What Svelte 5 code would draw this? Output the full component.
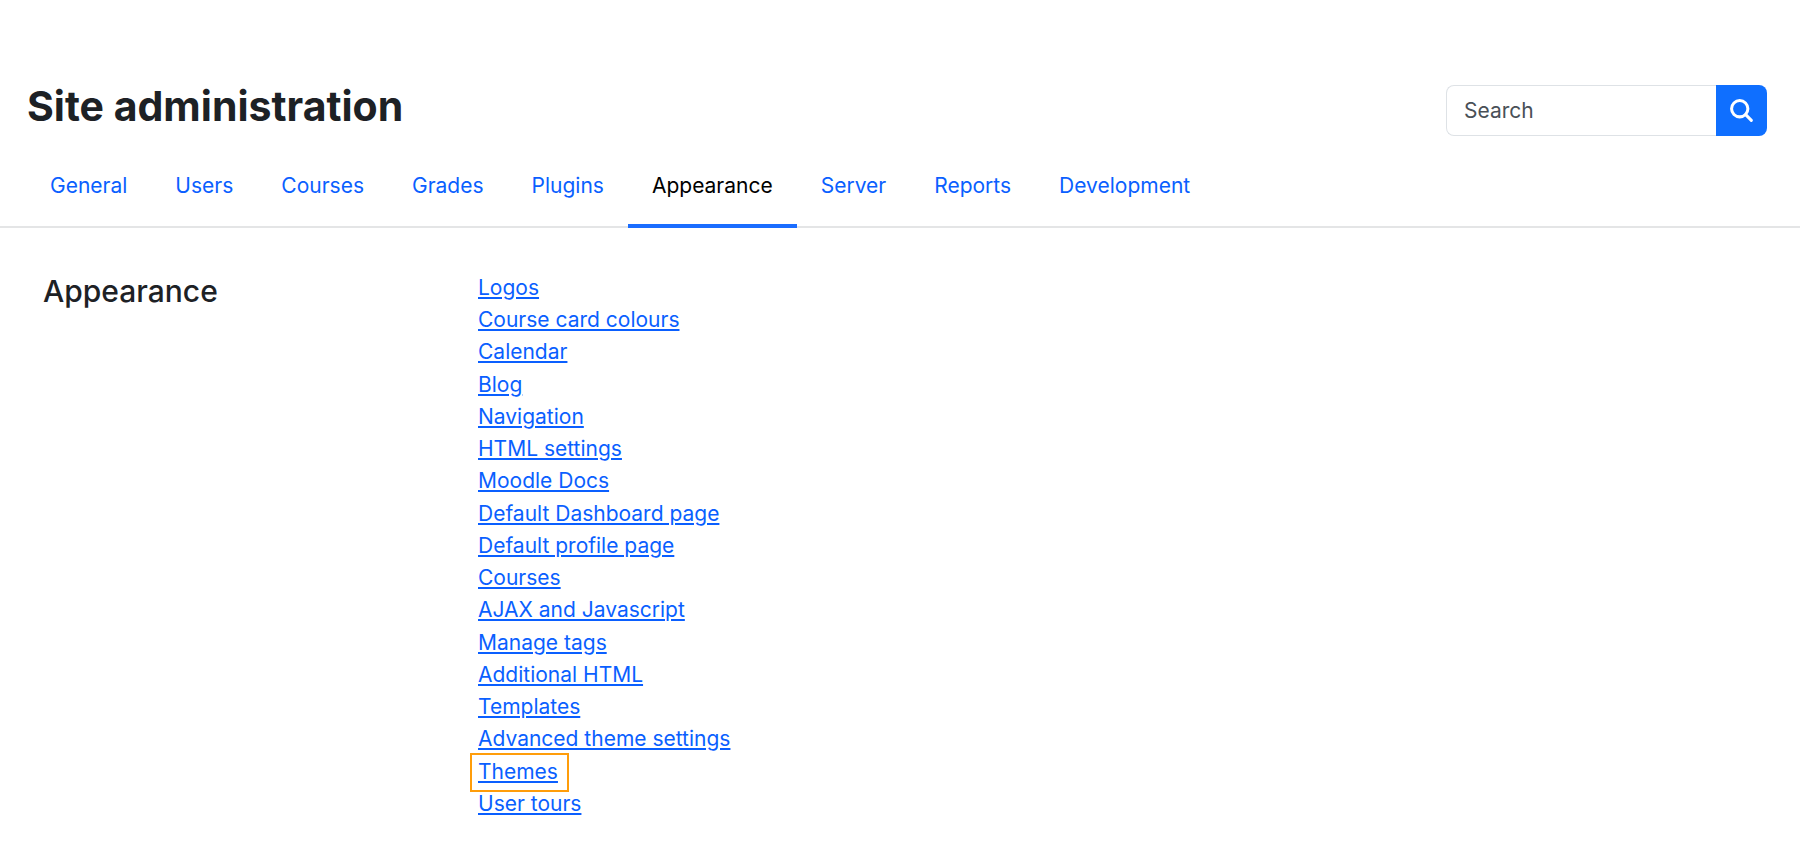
<script lang="ts">
  const tabs = ['General', 'Users', 'Courses', 'Grades', 'Plugins', 'Appearance', 'Server', 'Reports', 'Development'];
  const links = [
    'Logos',
    'Course card colours',
    'Calendar',
    'Blog',
    'Navigation',
    'HTML settings',
    'Moodle Docs',
    'Default Dashboard page',
    'Default profile page',
    'Courses',
    'AJAX and Javascript',
    'Manage tags',
    'Additional HTML',
    'Templates',
    'Advanced theme settings',
    'Themes',
    'User tours'
  ];

  let current = $state('Appearance');
  let query = $state('');
</script>

<header class="page-header">
  <h1>Site administration</h1>
  <form class="search" role="search" onsubmit={(e) => e.preventDefault()}>
    <input type="text" placeholder="Search" aria-label="Search" bind:value={query}>
    <button type="submit" aria-label="Submit search">
      <svg viewBox="0 0 22 22" aria-hidden="true">
        <circle cx="9.3" cy="9.3" r="7.8" />
        <path d="M15 15 20.4 20.4" />
      </svg>
    </button>
  </form>
</header>

<nav class="tabs" aria-label="Site administration">
  {#each tabs as tab}
    <a
      href="#{tab.toLowerCase()}"
      class:active={tab === current}
      aria-current={tab === current ? 'page' : undefined}
      onclick={() => (current = tab)}
    >{tab}</a>
  {/each}
</nav>

<main class="section">
  <h2>Appearance</h2>
  <ul class="links">
    {#each links as link}
      <li><a href="#{link.toLowerCase().replaceAll(' ', '-')}" class:highlight={link === 'Themes'}>{link}</a></li>
    {/each}
  </ul>
</main>

<style>
  :global(body) {
    background: #fff;
    color: #1d2125;
    font-family: Inter, "Liberation Sans", sans-serif;
    font-size: 21px;
  }

  a {
    color: #0a5fff;
  }

  .page-header {
    display: flex;
    justify-content: space-between;
    align-items: flex-start;
    padding: 80px 33px 0 27px;
  }

  h1 {
    margin: 0;
    font-size: 41px;
    line-height: 52px;
    font-weight: 700;
  }

  .search {
    display: flex;
    width: 321px;
    height: 51px;
    margin-top: 5px;
  }

  .search input {
    flex: 1;
    min-width: 0;
    box-sizing: border-box;
    padding: 0 17px;
    border: 1px solid #dee2e6;
    border-right: 0;
    border-radius: 8px 0 0 8px;
    color: #1d2125;
    font: inherit;
  }

  .search input::placeholder {
    color: #495057;
    opacity: 1;
  }

  .search button {
    display: flex;
    align-items: center;
    justify-content: center;
    width: 51px;
    padding: 0;
    border: 0;
    border-radius: 0 8px 8px 0;
    background: #0f6fff;
    cursor: pointer;
  }

  .search svg {
    width: 23px;
    height: 23px;
    fill: none;
    stroke: #fff;
    stroke-width: 2.9;
    stroke-linecap: round;
  }

  .tabs {
    display: flex;
    margin-top: 20px;
    padding: 0 26px;
    border-bottom: 2px solid #e4e5e6;
  }

  .tabs a {
    margin-bottom: -2px;
    padding: 14px 24px 22px;
    border-bottom: 4px solid transparent;
    line-height: 32px;
    text-decoration: none;
  }

  .tabs a.active {
    border-color: #1a6dff;
    color: #000;
  }

  .section {
    display: grid;
    grid-template-columns: 435px 1fr;
    padding: 44px 43px;
  }

  h2 {
    margin: 0;
    font-size: 30px;
    line-height: 38px;
    font-weight: 500;
  }

  .links {
    display: grid;
    grid-auto-rows: 1fr;
    min-height: 548px;
    margin: 0;
    padding: 0;
    list-style: none;
    line-height: 32px;
  }

  .links a {
    text-decoration-thickness: 2px;
    text-underline-offset: 2px;
  }

  .highlight {
    position: relative;
  }

  /* callout frame around the link */
  .highlight::after {
    content: "";
    position: absolute;
    inset: -6px -11px -8px -8px;
    border: 2px solid #ff9d0a;
    pointer-events: none;
  }
</style>
